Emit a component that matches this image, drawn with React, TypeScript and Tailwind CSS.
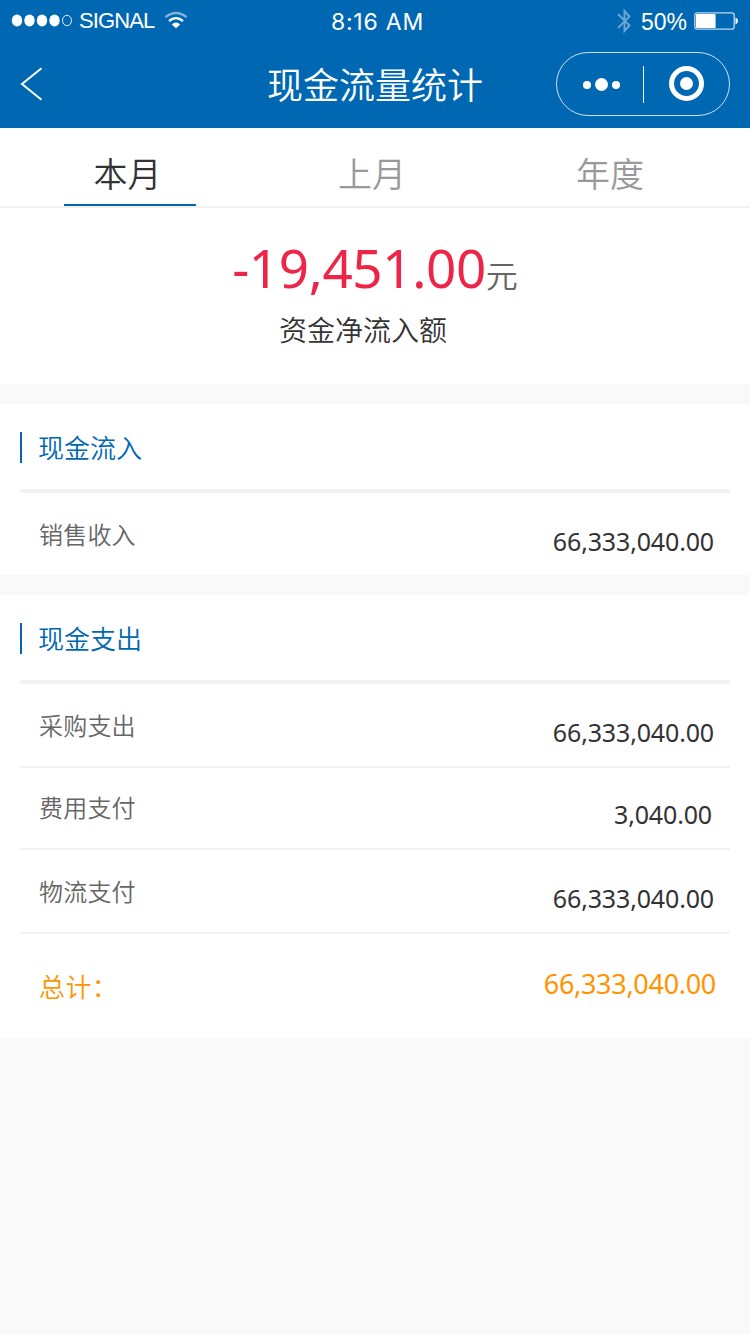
import { useState } from 'react';
import clsx from 'clsx';

interface Entry {
  label: string;
  amount: string;
}

const TABS = [
  { label: '本月', inset: 'pr-[5px]' },
  { label: '上月', inset: 'pl-1' },
  { label: '年度', inset: '' },
];

const INFLOW: Entry[] = [{ label: '销售收入', amount: '66,333,040.00' }];

const OUTFLOW: Entry[] = [
  { label: '采购支出', amount: '66,333,040.00' },
  { label: '费用支付', amount: '3,040.00' },
  { label: '物流支付', amount: '66,333,040.00' },
];

function StatusBar() {
  return (
    <div className="grid h-10 grid-cols-[1fr_auto_1fr] items-center pr-3 pl-[11px]">
      <div className="flex items-center">
        <svg width="62" height="14" viewBox="0 0 62 14" fill="#fff">
          <ellipse cx="6" cy="6.5" rx="5.2" ry="6" />
          <ellipse cx="18.5" cy="6.5" rx="5.2" ry="6" />
          <ellipse cx="31" cy="6.5" rx="5.2" ry="6" />
          <ellipse cx="43.5" cy="6.5" rx="5.2" ry="6" />
          <ellipse cx="56" cy="6.5" rx="4.5" ry="5.2" fill="none" stroke="#fff" strokeWidth="0.9" />
        </svg>
        <span className="ml-1.5 font-['Liberation_Sans',sans-serif] text-[22px] leading-10 tracking-[-0.9px]">SIGNAL</span>
        <svg className="ml-2.5 -mt-0.5" width="24" height="18" viewBox="0 0 24 18" fill="none" stroke="#fff" strokeWidth="2.3">
          <path d="M1.3 6.2Q12 -2.3 22.7 6.2" opacity="0.5" />
          <path d="M5 10Q12 4.2 19 10" />
          <path d="M7.8 13.4Q12 9.4 16.2 13.4L12 17.2Z" fill="#fff" stroke="none" />
        </svg>
      </div>
      <span className="pt-0.5 pl-1.5 font-['Inter',sans-serif] text-[23px] leading-10 tracking-[0.8px]">8:16 AM</span>
      <div className="flex items-center justify-end">
        <svg width="14" height="26" viewBox="0 0 14 26" fill="none" stroke="#fff" strokeWidth="1.9" opacity="0.42">
          <path d="M1 6L12.5 17.5L7.5 23V3L12.5 8.5L1 20" />
        </svg>
        <span className="ml-2.5 pt-0.5 font-['Liberation_Sans',sans-serif] text-[23px] leading-10">50%</span>
        <svg className="ml-[7px]" width="44" height="18" viewBox="0 0 44 18" fill="none">
          <rect x="0.8" y="0.8" width="39.4" height="16.4" rx="2.5" stroke="#fff" strokeOpacity="0.75" strokeWidth="1.3" />
          <rect x="2" y="2" width="19.6" height="14" rx="1" fill="#fff" />
          <path d="M41.5 5.5Q44 6.3 44 9T41.5 12.5Z" fill="#fff" />
        </svg>
      </div>
    </div>
  );
}

function NavBar() {
  return (
    <div className="grid h-[88px] grid-cols-[1fr_auto_1fr] items-center px-5">
      <button aria-label="返回" className="w-6">
        <svg width="24" height="34" viewBox="0 0 24 34" fill="none" stroke="#fff" strokeWidth="2">
          <path d="M21.5 1.3L2 17L21.5 32.7" />
        </svg>
      </button>
      <h1 className="pb-0.5 text-4xl leading-10 font-[350]">现金流量统计</h1>
      <div className="flex h-16 w-[174px] items-center justify-self-end rounded-full border border-white/80">
        <div className="flex w-[86px] items-center justify-center gap-1 pl-0.5">
          <span className="mt-0.5 size-2 rounded-full bg-white" />
          <span className="size-[13px] rounded-full bg-white" />
          <span className="mt-0.5 size-2 rounded-full bg-white" />
        </div>
        <span className="h-[37px] w-px bg-white" />
        <div className="flex flex-1 justify-center pb-px">
          <span className="flex size-[35px] items-center justify-center rounded-full border-[5px] border-white">
            <span className="size-[13px] rounded-full bg-white" />
          </span>
        </div>
      </div>
    </div>
  );
}

function Tabs() {
  const [active, setActive] = useState(0);
  return (
    <div className="flex h-20 justify-between border-b-2 border-[#f2f2f2] pr-[74px] pl-16">
      {TABS.map((tab, i) => (
        <button
          key={tab.label}
          onClick={() => setActive(i)}
          className={clsx(
            'w-[132px] border-b-2 pt-3.5 text-[34px] leading-[62px] font-[350]',
            tab.inset,
            i === active ? 'border-[#0068b3] text-[#333]' : 'border-transparent text-[#999]',
          )}
        >
          {tab.label}
        </button>
      ))}
    </div>
  );
}

function SectionTitle({ children }: { children: string }) {
  return (
    <div className="flex h-[89px] items-start border-b-4 border-[#f2f2f2] pt-7">
      <span className="h-[31px] w-0.5 bg-[#0068b3]" />
      <h2 className="ml-4 text-[26px] leading-[30px] font-[350] text-[#0068b3]">{children}</h2>
    </div>
  );
}

function Row({ label, amount, className }: Entry & { className?: string }) {
  return (
    <div className={clsx('flex justify-between pl-[19px]', className)}>
      <span className="pt-[23px] text-2xl leading-9 font-[350] tracking-[0.2px] text-[#666]">{label}</span>
      <span className="pt-[30px] font-['Noto_Sans',sans-serif] text-[25px] leading-9 font-normal tracking-[-0.15px] text-[#333]">
        {amount}
      </span>
    </div>
  );
}

export default function App() {
  return (
    <div className="min-h-[1334px] w-[750px] bg-[#f9f9f9] font-['Noto_Sans_CJK_SC',sans-serif]">
      <header className="bg-[#0068b3] text-white">
        <StatusBar />
        <NavBar />
      </header>

      <main>
        <div className="bg-white">
          <Tabs />
          <div className="flex h-44 flex-col items-center pt-[29px]">
            <div className="flex h-[72px] items-baseline">
              <span className="font-['Noto_Sans',sans-serif] text-[53px] leading-[62px] font-[380] tracking-[-0.4px] text-[#ed2548]">
                -19,451.00
              </span>
              <span className="text-[32px] leading-10 font-[350] text-[#666]">元</span>
            </div>
            <p className="mr-6 text-[28px] leading-10 font-[350] text-[#333]">资金净流入额</p>
          </div>
        </div>

        <section className="mt-5 bg-white px-5">
          <SectionTitle>现金流入</SectionTitle>
          {INFLOW.map((entry) => (
            <Row key={entry.label} {...entry} className="h-[82px] pr-4" />
          ))}
        </section>

        <section className="mt-5 bg-white px-5">
          <SectionTitle>现金支出</SectionTitle>
          {OUTFLOW.map((entry, i) => (
            <Row
              key={entry.label}
              {...entry}
              className={clsx('border-b-2 border-[#f2f2f2]', i === 1 ? '-mt-0.5 h-[84px] pr-[18px]' : 'h-[84px] pr-4')}
            />
          ))}
          <div className="flex h-[104px] justify-between pr-3.5 pl-[19px] text-[#ff9400]">
            <span className="pt-[34px] text-[26px] leading-9 font-[350] tracking-[0.4px]">总计：</span>
            <span className="pt-8 font-['Noto_Sans',sans-serif] text-[27px] leading-9 font-[380] tracking-[-0.3px]">66,333,040.00</span>
          </div>
        </section>
      </main>
    </div>
  );
}
